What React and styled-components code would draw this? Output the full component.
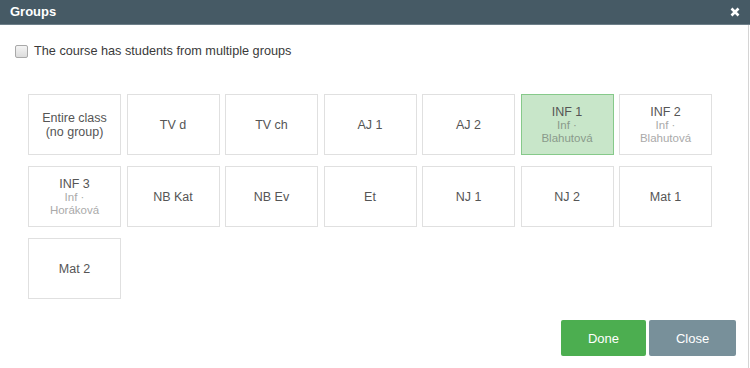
import React from "react";
import styled, { createGlobalStyle } from "styled-components";

const Global = createGlobalStyle`
  html, body { margin: 0; padding: 0; background: #fff; }
  body { font-family: "Liberation Sans", Arial, sans-serif; }
`;

const Modal = styled.div`
  width: 750px;
  height: 368px;
  display: flex;
  flex-direction: column;
  background: #fff;
`;

const Header = styled.div`
  height: 25px;
  background: #465a65;
  border-bottom: 1px solid #6d7f89;
  box-sizing: border-box;
  display: flex;
  align-items: center;
  justify-content: space-between;
  padding: 0 10px 1px 10px;
  color: #fff;
`;

const Title = styled.h4`
  margin: 0;
  font-size: 13px;
  font-weight: bold;
`;

const CloseX = styled.button`
  border: 0;
  background: none;
  padding: 0;
  width: 10px;
  height: 10px;
  display: flex;
  cursor: pointer;
`;

const Body = styled.div`
  flex: 1;
  border-right: 1px solid #d4d4d4;
  margin-right: 1px;
  padding: 19px 0 0 15px;
  display: flex;
  flex-direction: column;
`;

const CheckRow = styled.label`
  display: flex;
  align-items: center;
  gap: 6px;
  font-size: 12.7px;
  color: #3a3a3a;
`;

const Box = styled.span`
  width: 11px;
  height: 11px;
  border: 1px solid #a9a9a9;
  border-radius: 2px;
  background: linear-gradient(#f4f4f4, #dcdcdc);
`;

const Grid = styled.div`
  margin: 36px 0 0 13px;
  display: grid;
  grid-template-columns: repeat(7, 93px);
  grid-auto-rows: 61px;
  column-gap: 5.5px;
  row-gap: 11px;
`;

const Tile = styled.div`
  box-sizing: border-box;
  border: 1px solid ${(p) => (p.selected ? "#86c98a" : "#e0e0e0")};
  background: ${(p) => (p.selected ? "#c8e6c9" : "#fff")};
  display: flex;
  flex-direction: column;
  align-items: center;
  justify-content: center;
  text-align: center;
  font-size: 12.5px;
  line-height: 14px;
  color: #555;
`;

const Sub = styled.span`
  font-size: 11.5px;
  line-height: 13px;
  color: ${(p) => (p.selected ? "#8a9a8b" : "#aaa")};
`;

const Footer = styled.div`
  margin-top: auto;
  display: flex;
  justify-content: flex-end;
  gap: 3px;
  padding: 0 12px 12px 0;
`;

const Button = styled.button`
  height: 36px;
  width: ${(p) => p.w}px;
  border: 0;
  border-radius: 2px;
  color: #fff;
  font-family: inherit;
  font-size: 13px;
  background: ${(p) => p.bg};
`;

const groups = [
  { name: "Entire class", sub2: "(no group)" },
  { name: "TV d" },
  { name: "TV ch" },
  { name: "AJ 1" },
  { name: "AJ 2" },
  { name: "INF 1", sub: ["Inf ·", "Blahutová"], selected: true },
  { name: "INF 2", sub: ["Inf ·", "Blahutová"] },
  { name: "INF 3", sub: ["Inf ·", "Horáková"] },
  { name: "NB Kat" },
  { name: "NB Ev" },
  { name: "Et" },
  { name: "NJ 1" },
  { name: "NJ 2" },
  { name: "Mat 1" },
  { name: "Mat 2" },
];

export default function App() {
  return (
    <Modal>
      <Global />
      <Header>
        <Title>Groups</Title>
        <CloseX aria-label="close">
          <svg width="10" height="10" viewBox="0 0 10 10">
            <path d="M1.5 1.5 L8.5 8.5 M8.5 1.5 L1.5 8.5" stroke="#fff" strokeWidth="2.6" />
          </svg>
        </CloseX>
      </Header>
      <Body>
        <CheckRow>
          <Box />
          The course has students from multiple groups
        </CheckRow>
        <Grid>
          {groups.map((g) => (
            <Tile key={g.name} selected={g.selected}>
              <span>{g.name}</span>
              {g.sub2 && <span>{g.sub2}</span>}
              {g.sub &&
                g.sub.map((s) => (
                  <Sub key={s} selected={g.selected}>
                    {s}
                  </Sub>
                ))}
            </Tile>
          ))}
        </Grid>
        <Footer>
          <Button w={85} bg="#4cae50">Done</Button>
          <Button w={87} bg="#78909a">Close</Button>
        </Footer>
      </Body>
    </Modal>
  );
}
